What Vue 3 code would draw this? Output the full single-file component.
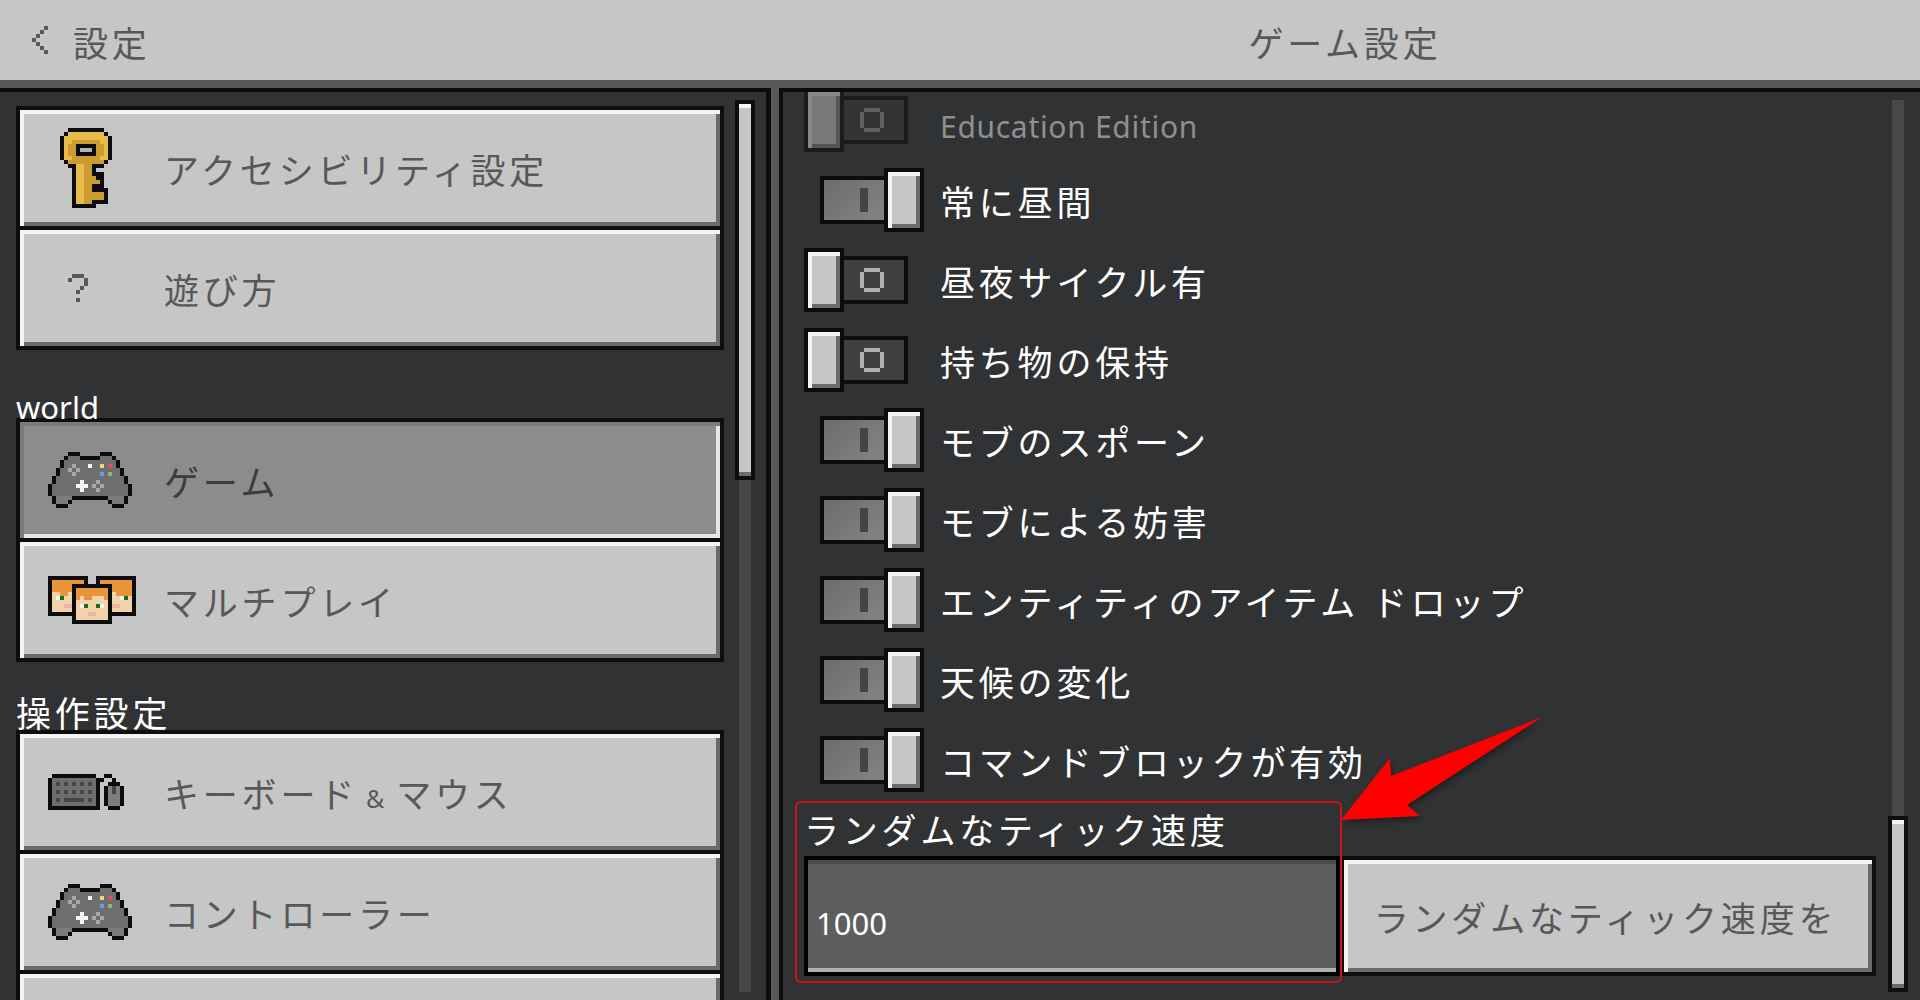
<script setup>
// pixel art icons: every char is one 4x4 block, "." stays empty
const palette = {
	K: "#0c0c0c", W: "#f4f4f4", L: "#a8a8a8",
	Y: "#e6bb48", G: "#c99b30", H: "#b4b4b4",
	C: "#6e6e6e", D: "#7c7c7c", E: "#1f6b1f",
	R: "#d8506a", A: "#e8dc80", B: "#58a8dc", V: "#8fb860",
	O: "#e8943a", S: "#f2d4aa", P: "#eeb4a4",
	N: "#444444", M: "#7e7e7e", Q: "#58585a",
};

const keyIcon = [
	"..KKKKKKKKK..",
	".KYYYYYYYYYK.",
	"KYYYYYYYYYYYK",
	"KYYGGGGGGGYYK",
	"KYGGKKKKKGGYK",
	"KYGGKHHHKGGYK",
	"KYGGKKKKKGGYK",
	"KYYGGGGGGGYYK",
	".KGGGGGGGGGK.",
	"..KKYYGGKKK..",
	"...KYYGGK....",
	"...KYYGGKKK..",
	"...KYYGGGKK..",
	"...KYYGGGGK..",
	"...KYYGGKKK..",
	"...KYYGGKKKK.",
	"...KYYGGGGGK.",
	"...KYYGGGGGK.",
	"...KYYGGKKKK.",
	"...KKKKKK....",
];

const padIcon = [
	".....KKK.....KKK.....",
	"....KCCCKKKKKCCCK....",
	"...KCCCCCCCCCCCCCK...",
	"...KCCLCCCWCCACRCK...",
	"..KCCLCLCCCCCCCCCCK..",
	"..KCCCLCCCCCCBCVCCK..",
	".KCCCCCCCCCCCCCCCCCK.",
	".KCCCCCCWCCCLCCCCCCK.",
	"KCCCCCCWWWCLCLCCCCCCK",
	"KCCCCCCCWCCCLCCCCCCCK",
	"KCCCCCCCCCCCCCCCCCCCK",
	".KDDDDKKKKKKKKKDDDDK.",
	".KDDDK.........KDDDK.",
	"..KKK...........KKK..",
];

const facesIcon = [
	"KKKKKKKKKK..KKKKKKKKKK",
	"KOOOOOOOOK..KOOOOOOOOK",
	"KOOOOOKKKKKKKKKKOOOOOK",
	"KOOOOOKOOOOOOOOKOOOOOK",
	"KSSOOSKOOOOOOOOKSOOOOK",
	"KSWESSKOSOOSSSOKSSWESK",
	"KSSSSSKSSSSSSSSKSSSSSK",
	"KSSSPPKSWESSEWSKPPSSSK",
	"KSSSSSKSSSSSSSSKSSSSSK",
	"KKKKKKKSSSPPSSSKKKKKKK",
	"......KSSSSSSSSK......",
	"......KKKKKKKKKK......",
];

const keyboardIcon = [
	".KKKKKKKKKKK..KK...",
	"KCCCCCCCCCCCKK..K..",
	"KCNCNCNCNCNCK..KKK.",
	"KCCCCCCCCCCCK.KMNMK",
	"KCNCNCNCNCNCK.KMNMK",
	"KCCCCCCCCCCCK.KMMMK",
	"KCNCNNNNNCNCK.KMMMK",
	"KCCCCCCCCCCCK.KMMMK",
	"KKKKKKKKKKKKK..KKK.",
];

const helpIcon = [
	".QQQ.",
	"Q...Q",
	"....Q",
	"...Q.",
	"..Q..",
	".....",
	"..Q..",
];

const chevronIcon = [
	"...Q",
	"..Q.",
	".Q..",
	"Q...",
	".Q..",
	"..Q.",
	"...Q",
];

const toRects = (rows) => {
	const rects = [];
	rows.forEach((row, y) => {
		[...row].forEach((ch, x) => {
			if (ch !== ".") rects.push({ x, y, fill: palette[ch] });
		});
	});
	return { w: rows[0].length, h: rows.length, rects };
};

const chevron = toRects(chevronIcon);

const sections = [
	{
		items: [
			{ text: "アクセシビリティ設定", icon: toRects(keyIcon), pad: 40 },
			{ text: "遊び方", icon: toRects(helpIcon), pad: 48 },
		],
	},
	{
		title: "world",
		latin: true,
		items: [
			{ text: "ゲーム", icon: toRects(padIcon), pad: 28, active: true },
			{ text: "マルチプレイ", icon: toRects(facesIcon), pad: 28 },
		],
	},
	{
		title: "操作設定",
		items: [
			{ text: "キーボード", after: "マウス", icon: toRects(keyboardIcon), pad: 28 },
			{ text: "コントローラー", icon: toRects(padIcon), pad: 28 },
			{ text: "" },
		],
	},
];

const toggles = [
	{ text: "Education Edition", on: false, dim: true },
	{ text: "常に昼間", on: true },
	{ text: "昼夜サイクル有", on: false },
	{ text: "持ち物の保持", on: false },
	{ text: "モブのスポーン", on: true },
	{ text: "モブによる妨害", on: true },
	{ text: "エンティティのアイテム ドロップ", on: true },
	{ text: "天候の変化", on: true },
	{ text: "コマンドブロックが有効", on: true },
];
</script>

<template>
	<div class="app">
		<header class="top">
			<div class="top-left">
				<svg class="chevron" width="16" height="28" viewBox="0 0 4 7" shape-rendering="crispEdges">
					<rect
						v-for="(r, n) in chevron.rects"
						:key="n"
						:x="r.x"
						:y="r.y"
						width="1"
						height="1"
						:fill="r.fill"
					/>
				</svg>
				<span>設定</span>
			</div>
			<div class="top-title">ゲーム設定</div>
		</header>

		<div class="body">
			<aside class="left">
				<div class="menu">
					<section v-for="(sec, i) in sections" :key="i">
						<div v-if="sec.title" class="sec-title" :class="{ latin: sec.latin }">{{ sec.title }}</div>
						<div
							v-for="item in sec.items"
							:key="item.text"
							class="btn menu-btn"
							:class="{ pressed: item.active }"
						>
							<div class="icon-slot">
								<svg
									v-if="item.icon"
									:style="{ marginLeft: item.pad + 'px' }"
									:width="item.icon.w * 4"
									:height="item.icon.h * 4"
									:viewBox="`0 0 ${item.icon.w} ${item.icon.h}`"
									shape-rendering="crispEdges"
								>
									<rect
										v-for="(r, n) in item.icon.rects"
										:key="n"
										:x="r.x"
										:y="r.y"
										width="1"
										height="1"
										:fill="r.fill"
									/>
								</svg>
							</div>
							<span class="btn-text">
								{{ item.text }}<template v-if="item.after"><span class="amp">&amp;</span>{{ item.after }}</template>
							</span>
						</div>
					</section>
				</div>
				<div class="track">
					<div class="thumb-bar left-bar" />
				</div>
			</aside>

			<main class="right">
				<div class="settings">
					<div class="rows">
						<div v-for="t in toggles" :key="t.text" class="row" :class="{ dim: t.dim }">
							<div class="toggle" :class="{ on: t.on }">
								<template v-if="t.on">
									<div class="tog-track">
										<div class="tog-bar" />
									</div>
									<div class="tog-thumb" />
								</template>
								<template v-else>
									<div class="tog-thumb" />
									<div class="tog-track">
										<svg width="24" height="24" viewBox="0 0 24 24" shape-rendering="crispEdges">
											<path d="M4 0h16v4H4zM4 20h16v4H4zM0 4h4v16H0zM20 4h4v16h-4z" />
										</svg>
									</div>
								</template>
							</div>
							<span class="row-text">{{ t.text }}</span>
						</div>
					</div>

					<div class="field-label">ランダムなティック速度</div>
					<div class="field">
						<div class="input-box">1000</div>
						<div class="btn field-btn"><span class="btn-text">ランダムなティック速度を</span></div>
					</div>
				</div>

				<div class="track right-track">
					<div class="thumb-bar right-bar" />
				</div>

				<div class="red-box" />
				<svg class="arrow" width="210" height="112" viewBox="0 0 210 112">
					<path d="M6 110L55 48L56 66L207 7L72 95L85 106Z" fill="#ff0000" />
				</svg>
			</main>
		</div>
	</div>
</template>

<style>
html,
body {
	margin: 0;
	background: #58585a;
}
</style>

<style scoped>
.app {
	width: 1920px;
	height: 1000px;
	overflow: hidden;
	display: flex;
	flex-direction: column;
	background: #58585a;
	font-family: "Noto Sans", "Noto Sans CJK JP", sans-serif;
	font-size: 35px;
	letter-spacing: 3.8px;
}

.top {
	height: 80px;
	flex: none;
	display: flex;
	align-items: center;
	background: #c6c6c6;
	color: #58585a;
}
.top-left {
	width: 780px;
	flex: none;
	display: flex;
	align-items: center;
	gap: 25px;
	padding-left: 32px;
	box-sizing: border-box;
	padding-top: 3px;
}
.chevron {
	margin-top: -3px;
}
.top-title {
	flex: 1;
	text-align: center;
	padding-right: 10px;
	padding-top: 3px;
}

.body {
	flex: 1;
	min-height: 0;
	display: flex;
	gap: 8px;
	padding-top: 8px;
}

.left,
.right {
	position: relative;
	background: #313233;
	border-top: 4px solid #0c0c0c;
	overflow: hidden;
	display: flex;
}
.left {
	width: 771px;
	box-sizing: border-box;
	border-right: 5px solid #0c0c0c;
	padding: 14px 0 0 16px;
}
.right {
	flex: 1;
	border-left: 4px solid #0c0c0c;
	padding-left: 21px;
}

.menu {
	width: 708px;
	flex: none;
}
.sec-title {
	height: 68px;
	display: flex;
	align-items: flex-end;
	color: #fff;
	line-height: 33px;
}
.sec-title.latin {
	font-size: 31px;
	line-height: 22px;
	letter-spacing: 0;
}

.btn {
	box-sizing: border-box;
	border: 4px solid #0e0e0f;
	background: #c6c6c6;
	color: #58585a;
	display: flex;
	align-items: center;
	box-shadow: inset 0 4px 0 #f4f4f4, inset 4px 0 0 #f4f4f4, inset 0 -4px 0 #6b6b6b, inset -4px 0 0 #6b6b6b;
}
.menu-btn {
	height: 124px;
	margin-top: -4px;
}
section:first-child .menu-btn:first-child {
	margin-top: 0;
}
.sec-title + .menu-btn {
	margin-top: 0;
}
.pressed {
	background: #8c8c8c;
	color: #3c3c3c;
	box-shadow: inset 0 4px 0 #7a7a7a, inset 4px 0 0 #7a7a7a, inset 0 -4px 0 #e6e6e6, inset -4px 0 0 #e6e6e6;
}
.icon-slot {
	width: 144px;
	flex: none;
	display: flex;
	align-items: center;
}
.amp {
	font-size: 25px;
	margin: 0 8px;
}

.track {
	width: 12px;
	height: 892px;
	flex: none;
	margin-top: -6px;
	margin-left: 15px;
	background: #48484a;
	display: flex;
	flex-direction: column;
}
.right-track {
	margin-top: 8px;
	margin-left: 16px;
	justify-content: flex-end;
}
.thumb-bar {
	box-sizing: border-box;
	margin: 0 -4px;
	border: 4px solid #0e0e0f;
	background: #c6c6c6;
	box-shadow: inset 0 4px 0 #f4f4f4, inset 0 -4px 0 #6b6b6b;
}
.left-bar {
	height: 380px;
}
.right-bar {
	height: 176px;
}

.settings {
	width: 1072px;
	flex: none;
}
.rows {
	margin-top: -4px;
}
.row {
	height: 64px;
	margin-bottom: 16px;
	display: flex;
	align-items: center;
	color: #fff;
}
.row:last-child {
	margin-bottom: 0;
}
.row-text {
	margin-left: 16px;
}
.dim .row-text {
	font-size: 30px;
	letter-spacing: 0.7px;
	color: #8f8f8f;
	padding-top: 12px;
}

.toggle {
	width: 120px;
	flex: none;
	display: flex;
	align-items: center;
}
.toggle.on {
	justify-content: flex-end;
}
.tog-thumb {
	box-sizing: border-box;
	width: 40px;
	height: 64px;
	border: 4px solid #0c0c0c;
	background: #c6c6c6;
	box-shadow: inset 0 4px 0 #f4f4f4, inset 4px 0 0 #f4f4f4, inset 0 -4px 0 #6b6b6b, inset -4px 0 0 #6b6b6b;
}
.tog-track {
	box-sizing: border-box;
	width: 64px;
	height: 48px;
	border: 4px solid #0c0c0c;
	border-left: none;
	background: #3f3f3f;
	display: flex;
	align-items: center;
	padding-left: 16px;
}
.tog-track path {
	fill: #b0b0b0;
}
.toggle.on .tog-track {
	border-left: 4px solid #0c0c0c;
	border-right: none;
	background: linear-gradient(135deg, #6c6c6c, #848484);
	padding-left: 36px;
}
.tog-bar {
	width: 8px;
	height: 24px;
	background: #444;
}
.dim .tog-thumb {
	background: #787878;
	border-color: #1c1c1c;
	box-shadow: inset 0 4px 0 #888, inset 4px 0 0 #888, inset 0 -4px 0 #555, inset -4px 0 0 #555;
}
.dim .tog-track {
	background: #333;
	border-color: #1c1c1c;
}
.dim .tog-track path {
	fill: #606060;
}

.field-label {
	height: 64px;
	color: #fff;
	line-height: 78px;
}
.field {
	display: flex;
	height: 120px;
}
.input-box {
	box-sizing: border-box;
	width: 536px;
	border: 4px solid #000;
	background: #5e5e5e;
	box-shadow: inset 0 4px 0 #4a4a4a, inset 0 -4px 0 #b0b0b0;
	color: #fff;
	font-size: 31px;
	letter-spacing: 0;
	padding: 42px 0 0 8px;
}
.field-btn {
	width: 536px;
	justify-content: center;
	padding-right: 5px;
}

.red-box {
	position: absolute;
	left: 12px;
	top: 709px;
	width: 547px;
	height: 182px;
	box-sizing: border-box;
	border: 2px solid #c8161a;
	border-radius: 6px;
}
.arrow {
	position: absolute;
	left: 552px;
	top: 618px;
	overflow: visible;
	filter: drop-shadow(2px 3px 3px rgba(0, 0, 0, 0.4));
}
</style>
